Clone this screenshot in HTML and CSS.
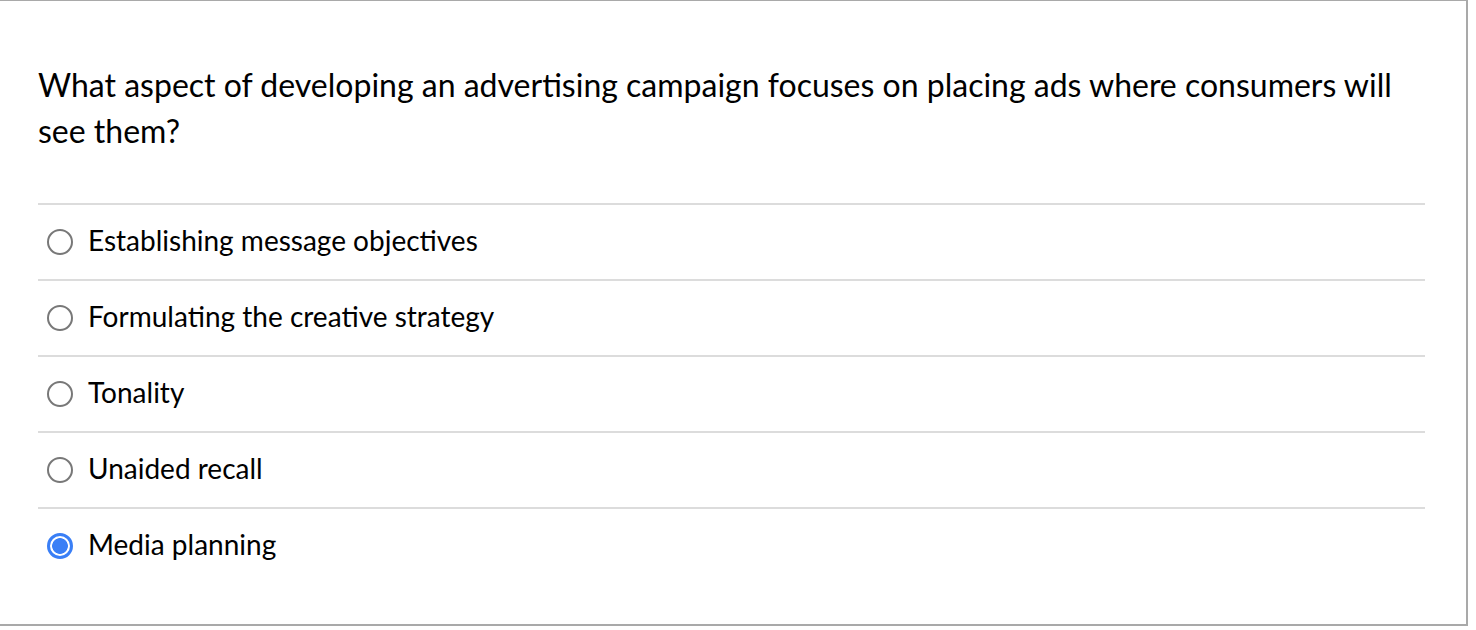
FILE: index.html
```html
<!DOCTYPE html>
<html lang="en">
<head>
<meta charset="utf-8">
<title>Quiz question</title>
<link rel="stylesheet" href="styles.css">
</head>
<body>
<div class="question">
  <p class="question-text">What aspect of developing an advertising campaign focuses on placing ads where consumers will see them?</p>
  <div class="answers">
    <label class="answer"><span class="radio"></span><span class="answer-text">Establishing message objectives</span></label>
    <label class="answer"><span class="radio"></span><span class="answer-text">Formulating the creative strategy</span></label>
    <label class="answer"><span class="radio"></span><span class="answer-text">Tonality</span></label>
    <label class="answer"><span class="radio"></span><span class="answer-text">Unaided recall</span></label>
    <label class="answer"><span class="radio checked"></span><span class="answer-text">Media planning</span></label>
  </div>
</div>
</body>
</html>
```
FILE: styles.css
```css
html, body {
  margin: 0;
  padding: 0;
  background: #ffffff;
}
body {
  font-family: Lato, "Liberation Sans", sans-serif;
  color: #000000;
}
.question {
  box-sizing: border-box;
  width: 1468px;
  height: 626px;
  border-top: 1px solid #a9a9a9;
  border-right: 2px solid #a9a9a9;
  border-bottom: 2px solid #a9a9a9;
  padding: 61px 41px 0 38px;
}
.question-text {
  margin: 0;
  font-size: 32px;
  line-height: 46px;
  max-width: 1380px;
}
.answers {
  margin-top: 49px;
}
.answer {
  display: flex;
  align-items: center;
  height: 74px;
  border-top: 2px solid #dcdcdc;
  padding-left: 9px;
}
.radio {
  box-sizing: border-box;
  width: 26px;
  height: 26px;
  border-radius: 50%;
  border: 2px solid #787878;
  margin-right: 15px;
  flex: none;
  background: #fff;
}
.radio.checked {
  border: 3px solid #3a7ff6;
  background: radial-gradient(circle, #3a7ff6 0 7.5px, #ffffff 8.2px);
}
.answer-text {
  font-size: 28px;
  margin-bottom: 4px;
}
```
